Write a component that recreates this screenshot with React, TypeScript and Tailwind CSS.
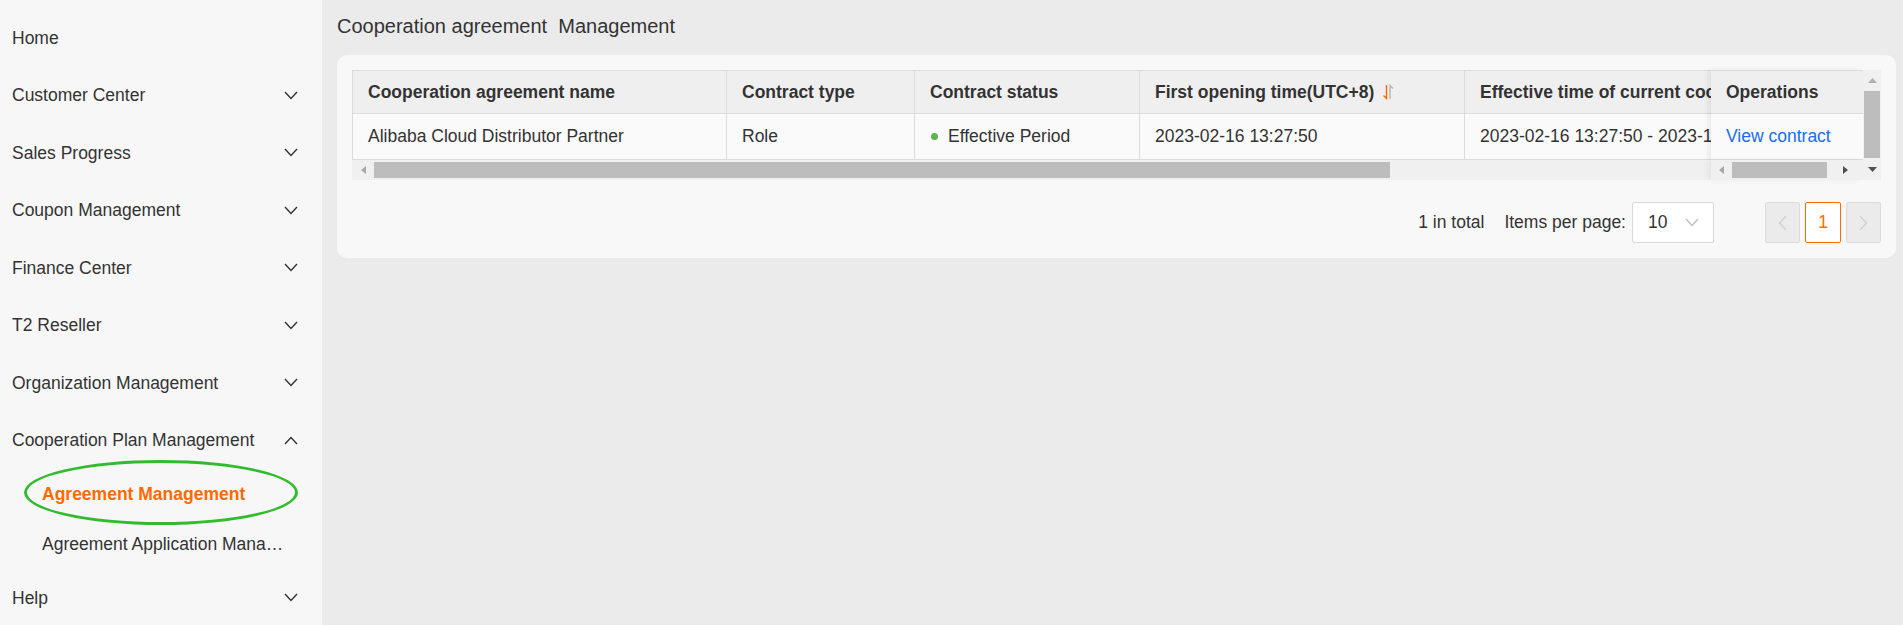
import React from "react";

const Chevron = ({ up = false, color = "#333", w = 14, h = 9 }: { up?: boolean; color?: string; w?: number; h?: number }) => (
  <svg width={w} height={h} viewBox="0 0 14 9" className="shrink-0">
    <path d={up ? "M1 8 L7 1.5 L13 8" : "M1 1 L7 7.5 L13 1"} fill="none" stroke={color} strokeWidth="1.4" />
  </svg>
);

const SideChevron = ({ dir, color }: { dir: "left" | "right"; color: string }) => (
  <svg width="9" height="16" viewBox="0 0 9 16">
    <path d={dir === "left" ? "M8 1 L1.5 8 L8 15" : "M1 1 L7.5 8 L1 15"} fill="none" stroke={color} strokeWidth="1.3" />
  </svg>
);

const Tri = ({ dir, color }: { dir: "left" | "right" | "up" | "down"; color: string }) => {
  const d =
    dir === "left"
      ? "M5 0 L0 4 L5 8 Z"
      : dir === "right"
      ? "M0 0 L5 4 L0 8 Z"
      : dir === "up"
      ? "M0 5 L4.5 0 L9 5 Z"
      : "M0 0 L4.5 5 L9 0 Z";
  const horiz = dir === "left" || dir === "right";
  return (
    <svg width={horiz ? 5 : 9} height={horiz ? 8 : 5} viewBox={horiz ? "0 0 5 8" : "0 0 9 5"}>
      <path d={d} fill={color} />
    </svg>
  );
};

const SortIcon = () => (
  <svg width="12" height="16" viewBox="0 0 12 16" className="ml-[8px] shrink-0">
    <path d="M4.5 1 V14.5 L1.5 11.5" fill="none" stroke="#ff6a00" strokeWidth="1.4" />
    <path d="M8 15 V1.5 L11 4.5" fill="none" stroke="#b5b5b5" strokeWidth="1.4" />
  </svg>
);

const topItems = [
  { label: "Home", chevron: false },
  { label: "Customer Center", chevron: true },
  { label: "Sales Progress", chevron: true },
  { label: "Coupon Management", chevron: true },
  { label: "Finance Center", chevron: true },
  { label: "T2 Reseller", chevron: true },
  { label: "Organization Management", chevron: true },
];

const cols = [
  { w: "w-[374px]", head: "Cooperation agreement name" },
  { w: "w-[188px]", head: "Contract type" },
  { w: "w-[225px]", head: "Contract status" },
  { w: "w-[325px]", head: "First opening time(UTC+8)" },
  { w: "w-[520px]", head: "Effective time of current cooperation agreement(UTC+8)" },
];

export default function App() {
  return (
    <div
      className="flex h-[625px] w-full overflow-hidden bg-[#ebebeb] text-[17.5px] text-[#333]"
      style={{ fontFamily: '"Liberation Sans", Arial, sans-serif' }}
    >
      {/* Sidebar */}
      <aside className="w-[322px] shrink-0 bg-[#f7f7f7] pt-[9px]">
        {topItems.map((it) => (
          <div key={it.label} className="flex h-[57.5px] items-center justify-between pl-[12px] pr-[24px]">
            <span>{it.label}</span>
            {it.chevron && <Chevron />}
          </div>
        ))}
        <div className="flex h-[57.5px] items-center justify-between pl-[12px] pr-[24px]">
          <span>Cooperation Plan Management</span>
          <Chevron up />
        </div>
        <div className="relative flex h-[50px] items-center pl-[42px] pr-[38px]">
          <span className="font-bold text-[#ff6a00]">Agreement Management</span>
          <div className="pointer-events-none absolute left-[24px] top-[-9px] h-[65px] w-[274px] rounded-[50%] border-[3px] border-[#33bb2e]" />
        </div>
        <div className="flex h-[50px] items-center pl-[42px] pr-[38px]">
          <span className="truncate">Agreement Application Management</span>
        </div>
        <div className="flex h-[57.5px] items-center justify-between pl-[12px] pr-[24px]">
          <span>Help</span>
          <Chevron />
        </div>
      </aside>

      {/* Main */}
      <main className="min-w-0 flex-1 pl-[15px] pr-[7px]">
        <h1 className="h-[55px] whitespace-pre pt-[12px] text-[20px] font-normal leading-[28px] text-[#333]">
          Cooperation agreement  Management
        </h1>
        <div className="rounded-[10px] bg-[#f8f8f8] px-[15px] pb-[15px] pt-[15px]">
          {/* Table */}
          <div className="flex">
            <div className="flex min-w-0 flex-1 flex-col">
              <div className="flex">
                <div className="min-w-0 flex-1 overflow-hidden border-l border-t border-[#dcdcdc]">
                  <div className="flex w-max">
                    {cols.map((c, i) => (
                      <div
                        key={c.head}
                        className={`${c.w} flex h-[43px] shrink-0 items-center whitespace-nowrap border-b border-r border-[#dcdcdc] bg-[#efefef] pl-[15px] font-bold`}
                      >
                        {c.head}
                        {i === 3 && <SortIcon />}
                      </div>
                    ))}
                  </div>
                  <div className="flex w-max">
                    <div className="flex h-[46px] w-[374px] shrink-0 items-center whitespace-nowrap border-b border-r border-[#dcdcdc] bg-[#fafafa] pl-[15px]">
                      Alibaba Cloud Distributor Partner
                    </div>
                    <div className="flex h-[46px] w-[188px] shrink-0 items-center whitespace-nowrap border-b border-r border-[#dcdcdc] bg-[#fafafa] pl-[15px]">
                      Role
                    </div>
                    <div className="flex h-[46px] w-[225px] shrink-0 items-center whitespace-nowrap border-b border-r border-[#dcdcdc] bg-[#fafafa] pl-[16px]">
                      <span className="mr-[10px] inline-block h-[7px] w-[7px] rounded-full bg-[#5cb548]" />
                      Effective Period
                    </div>
                    <div className="flex h-[46px] w-[325px] shrink-0 items-center whitespace-nowrap border-b border-r border-[#dcdcdc] bg-[#fafafa] pl-[15px]">
                      2023-02-16 13:27:50
                    </div>
                    <div className="flex h-[46px] w-[520px] shrink-0 items-center whitespace-nowrap border-b border-r border-[#dcdcdc] bg-[#fafafa] pl-[15px]">
                      2023-02-16 13:27:50 - 2023-12-31 23:59:59
                    </div>
                  </div>
                </div>
                {/* Fixed operations column */}
                <div className="w-[152px] shrink-0 border-t border-[#dcdcdc] shadow-[-3px_0_5px_rgba(0,0,0,0.07)]">
                  <div className="flex h-[43px] items-center border-b border-[#dcdcdc] bg-[#efefef] pl-[15px] font-bold">
                    Operations
                  </div>
                  <div className="flex h-[46px] items-center border-b border-[#dcdcdc] bg-[#fafafa] pl-[15px] text-[#1a6df2]">
                    View contract
                  </div>
                </div>
              </div>
              {/* Horizontal scrollbars */}
              <div className="flex h-[20px]">
                <div className="flex min-w-0 flex-1 items-center bg-[#f0f0f0]">
                  <div className="flex w-[22px] shrink-0 justify-center">
                    <Tri dir="left" color="#a8a8a8" />
                  </div>
                  <div className="h-[16px] w-[1016px] shrink-0 bg-[#bdbdbd]" />
                </div>
                <div className="flex w-[152px] shrink-0 items-center bg-[#f0f0f0] shadow-[-3px_0_5px_rgba(0,0,0,0.05)]">
                  <div className="flex w-[21px] shrink-0 justify-center">
                    <Tri dir="left" color="#a8a8a8" />
                  </div>
                  <div className="h-[16px] w-[95px] shrink-0 bg-[#bdbdbd]" />
                  <div className="flex flex-1 justify-center">
                    <Tri dir="right" color="#505050" />
                  </div>
                </div>
              </div>
            </div>
            {/* Vertical scrollbar */}
            <div className="flex w-[18px] shrink-0 flex-col items-center bg-[#f0f0f0]">
              <div className="flex h-[21px] items-center">
                <Tri dir="up" color="#b0b0b0" />
              </div>
              <div className="h-[67px] w-[16px] bg-[#bdbdbd]" />
              <div className="flex flex-1 items-center">
                <Tri dir="down" color="#505050" />
              </div>
            </div>
          </div>

          {/* Pagination */}
          <div className="mt-[22px] flex h-[41px] items-center justify-end">
            <span>1 in total</span>
            <span className="ml-[20px]">Items per page:</span>
            <div className="ml-[6px] flex h-[41px] w-[82px] items-center justify-between rounded-[2px] border border-[#d9d9d9] bg-white pl-[15px] pr-[14px]">
              <span>10</span>
              <Chevron color="#bdbdbd" />
            </div>
            <div className="ml-[51px] flex h-[41px] w-[35px] items-center justify-center rounded-[2px] border border-[#dcdcdc] bg-[#ebebeb]">
              <SideChevron dir="left" color="#cfcfcf" />
            </div>
            <div className="ml-[5px] flex h-[41px] w-[36px] items-center justify-center rounded-[2px] border border-[#ff6a00] bg-white text-[#ff6a00]">
              1
            </div>
            <div className="ml-[5px] flex h-[41px] w-[35px] items-center justify-center rounded-[2px] border border-[#dcdcdc] bg-[#ebebeb]">
              <SideChevron dir="right" color="#cfcfcf" />
            </div>
          </div>
        </div>
      </main>
    </div>
  );
}
